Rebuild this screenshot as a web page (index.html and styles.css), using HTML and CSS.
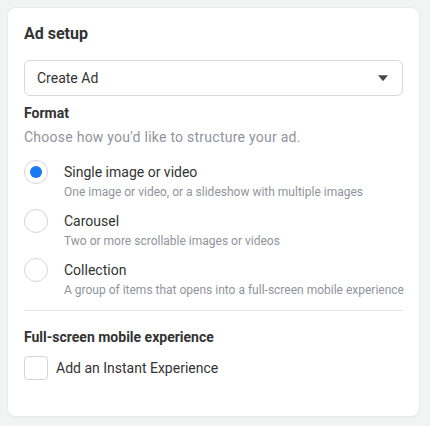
FILE: index.html
```html
<!DOCTYPE html>
<html lang="en">
<head>
  <meta charset="UTF-8" />
  <meta name="viewport" content="width=device-width, initial-scale=1.0"/>
  <title>Ad setup</title>
  <link rel="stylesheet" href="styles.css">
</head>
<body>

  <div class="card">
    <!-- Title -->
    <div class="title">Ad setup</div>

    <!-- Ad select -->
    <div class="select">
      <span>Create Ad</span>
      <svg class="caret" width="10" height="6" viewBox="0 0 10 6">
        <path d="M0 0.3h10L5.6 5.6q-0.6 0.6-1.2 0z" fill="#444950"/>
      </svg>
    </div>

    <!-- Format -->
    <div class="section-title">Format</div>
    <div class="section-hint">Choose how you'd like to structure your ad.</div>

    <div class="option">
      <span class="radio checked"></span>
      <div>
        <div class="option-label">Single image or video</div>
        <div class="option-sub">One image or video, or a slideshow with multiple images</div>
      </div>
    </div>
    <div class="option">
      <span class="radio"></span>
      <div>
        <div class="option-label">Carousel</div>
        <div class="option-sub">Two or more scrollable images or videos</div>
      </div>
    </div>
    <div class="option">
      <span class="radio"></span>
      <div>
        <div class="option-label">Collection</div>
        <div class="option-sub">A group of items that opens into a full-screen mobile experience</div>
      </div>
    </div>

    <div class="divider"></div>

    <!-- Full-screen -->
    <div class="section-title fullscreen">Full-screen mobile experience</div>
    <div class="check-row">
      <span class="checkbox"></span>
      <span class="check-label">Add an Instant Experience</span>
    </div>
  </div>

</body>
</html>
```

FILE: styles.css
```css
body {
  margin: 0;
  padding: 8px 11px 10px 8px;
  background: #f2f3f3;
  font-family: Roboto, "Liberation Sans", sans-serif;
  color: #1c1e21;
}

.card {
  background: #fff;
  border-radius: 8px;
  box-shadow: 0 0 0 1px #e9eaeb, 0 1px 2px rgba(0,0,0,0.08);
  padding: 16px 16px 36px 16px;
}

.title {
  font-size: 16px;
  font-weight: 700;
  line-height: 20px;
  color: #333;
}

.select {
  margin-top: 16px;
  height: 34px;
  border: 1px solid #d6d8db;
  border-radius: 6px;
  display: flex;
  align-items: center;
  justify-content: space-between;
  padding: 0 14px 0 12px;
  font-size: 14px;
  color: #333;
}

.section-title {
  margin-top: 8px;
  font-size: 14px;
  font-weight: 700;
  line-height: 18px;
  color: #333;
}

.section-hint {
  margin-top: 6px;
  font-size: 14px;
  letter-spacing: 0.25px;
  line-height: 18px;
  color: #90949c;
  margin-bottom: 14px;
}

.option {
  display: flex;
  gap: 16px;
  margin-bottom: 9px;
}

.radio {
  flex: none;
  width: 22px;
  height: 22px;
  border: 1px solid #d3d5d8;
  border-radius: 50%;
  display: flex;
  align-items: center;
  justify-content: center;
}

.radio.checked::after {
  content: "";
  width: 12px;
  height: 12px;
  border-radius: 50%;
  background: #1877f2;
}

.option-label {
  font-size: 14px;
  line-height: 24px;
  color: #333;
}

.option-sub {
  font-size: 12px;
  line-height: 16px;
  color: #90949c;
  white-space: nowrap;
}

.divider {
  margin-top: 12px;
  height: 1px;
  background: #e5e6e8;
}

.section-title.fullscreen {
  margin-top: 17px;
}

.check-row {
  margin-top: 10px;
  display: flex;
  align-items: center;
  gap: 8px;
}

.checkbox {
  width: 22px;
  height: 22px;
  border: 1px solid #d3d5d8;
  border-radius: 4px;
}

.check-label {
  font-size: 14px;
  color: #333;
}
```
